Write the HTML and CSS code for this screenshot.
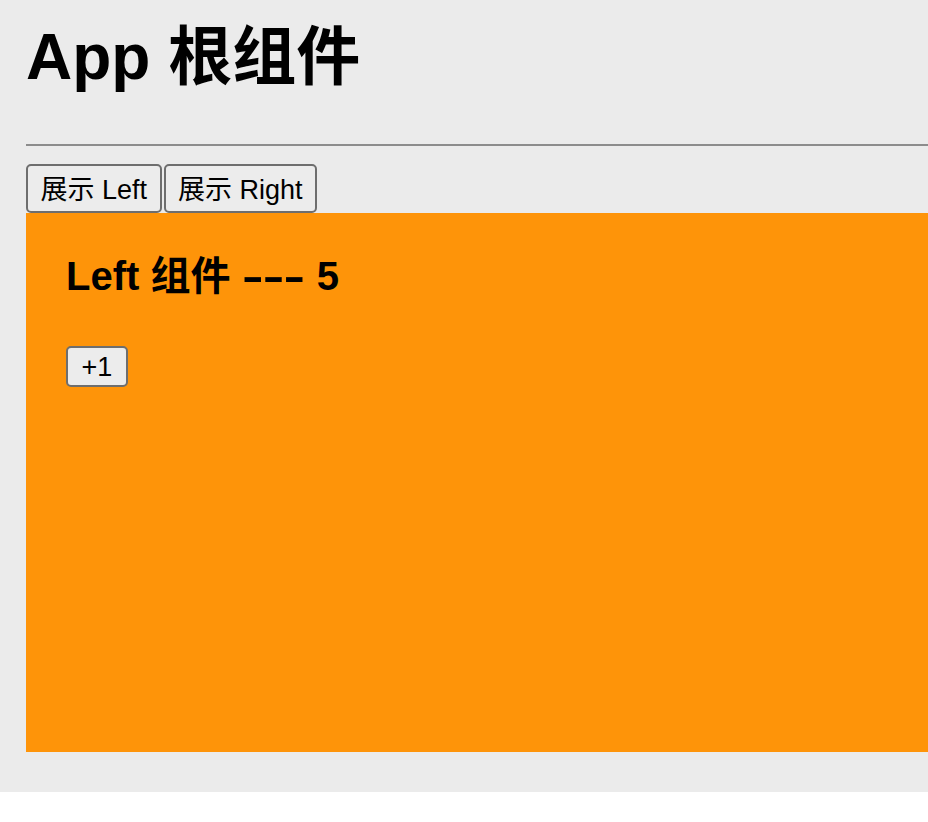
FILE: index.html
```html
<!DOCTYPE html>
<html lang="zh-CN">
<head>
<meta charset="utf-8">
<title>App</title>
<link rel="stylesheet" href="styles.css">
</head>
<body>
<div class="app">
  <h1 class="app-title">App 根组件</h1>
  <div class="rule"></div>
  <div class="tabs">
    <button class="btn tab-btn">展示 Left</button>
    <button class="btn tab-btn">展示 Right</button>
  </div>
  <div class="panel">
    <h2 class="panel-title">Left 组件 <span class="dashes">---</span> 5</h2>
    <button class="btn inc-btn">+1</button>
  </div>
</div>
</body>
</html>
```

FILE: styles.css
```css
html, body {
  margin: 0;
  padding: 0;
  background: #ffffff;
}

body {
  font-family: "Liberation Sans", "Noto Sans CJK SC", sans-serif;
  color: #000;
}

.app {
  background: #ebebeb;
  padding: 0 0 40px 26px;
  display: flex;
  flex-direction: column;
  align-items: stretch;
}

.app-title {
  margin: 19px 0 0 0;
  font-size: 64px;
  line-height: 76px;
  font-weight: 700;
  height: 76px;
}

.rule {
  margin-top: 49px;
  border-top: 2px solid #8c8c8c;
  height: 0;
}

.tabs {
  margin-top: 18px;
  display: flex;
  gap: 2px;
}

.btn {
  font-family: "Liberation Sans", "Noto Sans CJK SC", sans-serif;
  font-size: 27px;
  color: #000;
  background: #ececec;
  border: 2px solid #6e6e6e;
  border-radius: 5px;
  margin: 0;
  line-height: 31px;
}

.tab-btn {
  padding: 9px 12.5px 5px;
  height: 49px;
}

.inc-btn {
  padding: 4px 13.5px 2px;
  height: 41px;
  align-self: flex-start;
}

.panel {
  background: #fe9409;
  height: 539px;
  box-sizing: border-box;
  padding: 40px 0 0 40px;
  display: flex;
  flex-direction: column;
  align-items: flex-start;
}

.panel-title {
  margin: 0 0 47px 0;
  font-size: 40px;
  line-height: 46px;
  height: 46px;
  font-weight: 700;
  white-space: nowrap;
}

.dashes {
  display: inline-block;
  width: 64px;
  transform: scaleX(1.62);
  transform-origin: left center;
  letter-spacing: -0.5px;
}
```
